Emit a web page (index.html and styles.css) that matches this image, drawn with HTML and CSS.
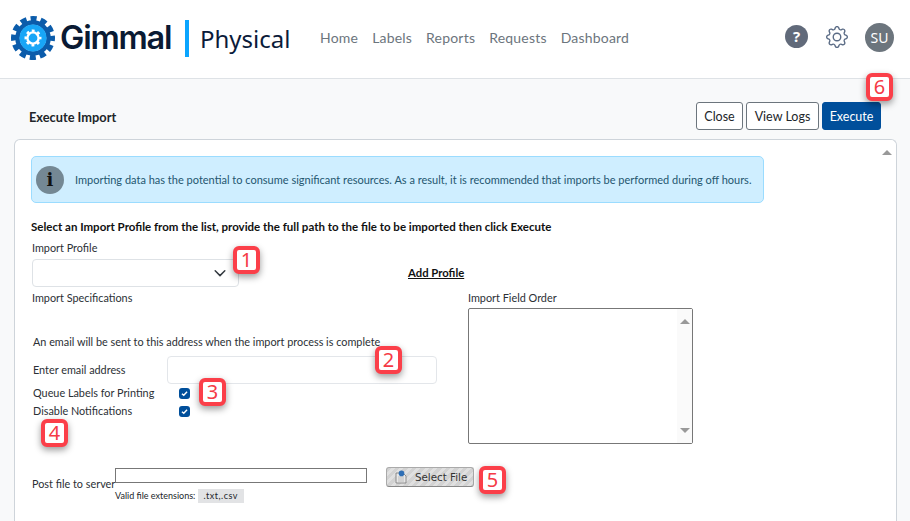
FILE: index.html
```html
<!DOCTYPE html>
<html lang="en">
<head>
<meta charset="utf-8">
<title>Execute Import</title>
<link rel="stylesheet" href="styles.css">
</head>
<body>
<div class="page">
  <header class="topbar">
    <div class="brand">
      <svg class="logo" viewBox="0 0 44 44" aria-hidden="true">
        <circle cx="22" cy="22" r="19" fill="none" stroke="#0b5cab" stroke-width="6" stroke-dasharray="6 3.95" stroke-dashoffset="3" />
        <circle cx="22" cy="22" r="15.5" fill="none" stroke="#0b5cab" stroke-width="4.5"/>
        <circle cx="22" cy="22" r="13.5" fill="#18a6f7"/>
        <circle cx="22" cy="22" r="7.2" fill="none" stroke="#fff" stroke-width="2.6" stroke-dasharray="2.8 2.85" stroke-dashoffset="1.4"/>
        <circle cx="22" cy="22" r="5.6" fill="none" stroke="#fff" stroke-width="2.4"/>
      </svg>
      <span class="brand-name">Gimmal</span>
      <span class="brand-bar"></span>
      <span class="brand-product">Physical</span>
    </div>
    <nav class="nav">
      <a>Home</a><a>Labels</a><a>Reports</a><a>Requests</a><a>Dashboard</a>
    </nav>
    <div class="top-icons">
      <span class="help">?</span>
      <svg class="cog" viewBox="0 0 16 16" aria-hidden="true">
        <path d="M8 4.754a3.246 3.246 0 1 0 0 6.492 3.246 3.246 0 0 0 0-6.492zM5.754 8a2.246 2.246 0 1 1 4.492 0 2.246 2.246 0 0 1-4.492 0z"/>
        <path d="M9.796 1.343c-.527-1.79-3.065-1.79-3.592 0l-.094.319a.873.873 0 0 1-1.255.52l-.292-.16c-1.64-.892-3.433.902-2.54 2.541l.159.292a.873.873 0 0 1-.52 1.255l-.319.094c-1.79.527-1.79 3.065 0 3.592l.319.094a.873.873 0 0 1 .52 1.255l-.16.292c-.892 1.64.901 3.434 2.541 2.54l.292-.159a.873.873 0 0 1 1.255.52l.094.319c.527 1.79 3.065 1.79 3.592 0l.094-.319a.873.873 0 0 1 1.255-.52l.292.16c1.64.893 3.434-.902 2.54-2.541l-.159-.292a.873.873 0 0 1 .52-1.255l.319-.094c1.79-.527 1.79-3.065 0-3.592l-.319-.094a.873.873 0 0 1-.52-1.255l.16-.292c.893-1.64-.902-3.433-2.541-2.54l-.292.159a.873.873 0 0 1-1.255-.52l-.094-.319zm-2.633.283c.246-.835 1.428-.835 1.674 0l.094.319a1.873 1.873 0 0 0 2.693 1.115l.291-.16c.764-.415 1.6.42 1.184 1.185l-.159.292a1.873 1.873 0 0 0 1.116 2.692l.318.094c.835.246.835 1.428 0 1.674l-.319.094a1.873 1.873 0 0 0-1.115 2.693l.16.291c.415.764-.42 1.6-1.185 1.184l-.291-.159a1.873 1.873 0 0 0-2.693 1.116l-.094.318c-.246.835-1.428.835-1.674 0l-.094-.319a1.873 1.873 0 0 0-2.692-1.115l-.292.16c-.764.415-1.6-.42-1.184-1.185l.159-.291A1.873 1.873 0 0 0 1.945 8.93l-.319-.094c-.835-.246-.835-1.428 0-1.674l.319-.094A1.873 1.873 0 0 0 3.06 4.377l-.16-.292c-.415-.764.42-1.6 1.185-1.184l.292.159a1.873 1.873 0 0 0 2.692-1.115l.094-.319z"/>
      </svg>
      <span class="avatar">SU</span>
    </div>
  </header>

  <main class="content">
    <div class="title-row">
      <h1 class="title">Execute Import</h1>
      <div class="actions">
        <button class="btn btn-close">Close</button>
        <button class="btn btn-logs">View Logs</button>
        <button class="btn btn-primary">Execute</button>
      </div>
    </div>

    <section class="panel">
      <div class="panel-scroll"><span class="arrow-up"></span></div>
      <div class="alert">
        <span class="alert-icon">i</span>
        <span class="alert-text">Importing data has the potential to consume significant resources. As a result, it is recommended that imports be performed during off hours.</span>
      </div>
      <p class="instruction">Select an Import Profile from the list, provide the full path to the file to be imported then click Execute</p>

      <div class="profile-row">
        <div class="profile-field">
          <label class="label">Import Profile</label>
          <div class="select">
            <svg class="chevron" viewBox="0 0 16 16" aria-hidden="true"><path d="M2.5 5.5 8 11l5.5-5.5" fill="none" stroke="#343a40" stroke-width="1.7" stroke-linecap="round" stroke-linejoin="round"/></svg>
          </div>
        </div>
        <a class="add-profile">Add Profile</a>
      </div>

      <div class="columns">
        <div class="col-left">
          <div class="label spec-label">Import Specifications</div>
          <div class="label note">An email will be sent to this address when the import process is complete</div>
          <div class="email-row">
            <label class="label row-label">Enter email address</label>
            <div class="input"></div>
          </div>
          <div class="check-row first">
            <label class="label check-label">Queue Labels for Printing</label>
            <span class="check"><svg viewBox="0 0 12 12" aria-hidden="true"><path d="M3.2 6.2 5.2 8l3.6-4" fill="none" stroke="#fff" stroke-width="1.5"/></svg></span>
          </div>
          <div class="check-row">
            <label class="label check-label">Disable Notifications</label>
            <span class="check"><svg viewBox="0 0 12 12" aria-hidden="true"><path d="M3.2 6.2 5.2 8l3.6-4" fill="none" stroke="#fff" stroke-width="1.5"/></svg></span>
          </div>
        </div>
        <div class="col-right">
          <div class="label">Import Field Order</div>
          <div class="listbox">
            <div class="list-scroll"><span class="arrow-up"></span><span class="arrow-down"></span></div>
          </div>
        </div>
      </div>

      <div class="file-row">
        <label class="label post-label">Post file to server</label>
        <div class="file-field">
          <div class="file-input"></div>
          <div class="file-hint">Valid file extensions: <span class="chip">.txt,.csv</span></div>
        </div>
        <button class="select-file">
          <svg class="file-icon" viewBox="0 0 14 14" aria-hidden="true">
            <path d="M2 3h7l3 3v7H2z" fill="#e8e8e8" stroke="#777" stroke-width=".8"/>
            <path d="M4 7h6M4 9h6M4 11h6" stroke="#aaa" stroke-width=".7"/>
            <circle cx="7.5" cy="3.4" r="2.8" fill="#2f6fb5"/>
          </svg>
          <span>Select File</span>
        </button>
      </div>
    </section>
  </main>

  <span class="badge b1">1</span>
  <span class="badge b2">2</span>
  <span class="badge b3">3</span>
  <span class="badge b4">4</span>
  <span class="badge b5">5</span>
  <span class="badge b6">6</span>
</div>
</body>
</html>
```
FILE: styles.css
```css
* { box-sizing: border-box; }
html, body { margin: 0; height: 100%; overflow: hidden; }
body {
  font-family: "Lato", "Noto Sans", sans-serif;
  font-size: 11px;
  color: #212529;
  background: #f8f9fa;
}
.page { position: relative; height: 521px; display: flex; flex-direction: column; overflow: hidden; }

.topbar {
  height: 79px;
  flex: none;
  background: #fff;
  border-bottom: 1px solid #dee2e6;
  display: flex;
  align-items: center;
  padding: 0 16px 3px 11px;
}
.brand { display: flex; align-items: center; width: 309px; }
.logo { width: 44px; height: 44px; flex: none; margin-top: 1px; }
.brand-name {
  font-family: "Inter", sans-serif;
  font-weight: 600;
  font-size: 32.5px;
  letter-spacing: -1.2px;
  color: #0a1a33;
  margin-left: 5px;
  width: 125px;
}
.brand-bar { width: 4px; height: 37px; background: #0aa5ff; flex: none; margin-top: 1px; }
.brand-product { font-family: "Noto Sans", sans-serif; font-size: 24px; color: #0b1b3a; margin: 2px 0 0 11px; line-height: 1; }
.nav { display: flex; gap: 14px; font-size: 14px; color: #6c757d; letter-spacing: .2px; }
.top-icons { margin-left: auto; display: flex; align-items: center; }
.help {
  width: 23px; height: 23px; border-radius: 50%;
  background: #616a7a; color: #fff;
  font-family: "Noto Sans", sans-serif;
  font-weight: 700; font-size: 15px; line-height: 23px; text-align: center;
  margin-top: -2px;
}
.cog { width: 22px; height: 22px; fill: #5a6b85; margin: -1px 0 0 18px; }
.avatar {
  width: 29px; height: 29px; border-radius: 50%;
  background: #6c757d; color: #fff;
  font-family: "Noto Sans", sans-serif;
  font-size: 14px; line-height: 29px; text-align: center;
  margin-left: 17px;
}

.content { flex: 1; min-height: 0; display: flex; flex-direction: column; padding: 23px 13px 0 14px; }
.title-row { display: flex; align-items: center; justify-content: space-between; height: 28px; padding: 0 16px 0 15px; flex: none; }
.title { margin: 2px 0 0; font-size: 12.8px; font-weight: 700; color: #212529; }
.actions { display: flex; gap: 3px; }
.btn {
  height: 28px; padding: 0;
  font: inherit; font-size: 12.5px; color: #212529;
  background: #fff; border: 1px solid #6c757d; border-radius: 3px;
}
.btn-close { width: 47px; }
.btn-logs { width: 73px; }
.btn-primary { width: 59px; background: #004f9b; border-color: #004f9b; color: #fff; }

.panel {
  position: relative;
  flex: 1;
  margin-top: 9px;
  background: #fff;
  border: 1px solid #ced4da;
  border-bottom: 0;
  border-radius: 6px 6px 0 0;
  padding: 16px 16px 0;
}
.panel-scroll { position: absolute; top: 0; right: 0; bottom: 0; width: 16px; background: #fff; border-radius: 0 6px 0 0; }
.panel-scroll .arrow-up { position: absolute; top: 10px; left: 2px; }
.arrow-up, .arrow-down { display: block; width: 0; height: 0; border-left: 5px solid transparent; border-right: 5px solid transparent; }
.arrow-up { border-bottom: 5px solid #999; }
.arrow-down { border-top: 5px solid #999; }

.alert {
  width: 733px; height: 47px;
  display: flex; align-items: center; gap: 11px;
  padding-left: 4px;
  background: #cfeeff;
  border: 1px solid #9bdcff;
  border-radius: 5px;
  color: #24566f;
}
.alert-icon {
  width: 28px; height: 28px; border-radius: 50%; flex: none;
  background: #748894; color: #111;
  font-family: "DejaVu Serif", serif; font-weight: 700; font-size: 18px; line-height: 28px; text-align: center;
}
.alert-text { white-space: nowrap; }
.instruction { margin: 16px 0 0; font-size: 11.5px; font-weight: 700; color: #111; line-height: 16px; white-space: nowrap; }
.label { display: block; font-size: 10.85px; line-height: 14px; color: #2b3035; white-space: nowrap; }

.profile-row { display: flex; align-items: flex-end; margin-top: 6px; }
.profile-field { width: 377px; padding-left: 1px; }
.select {
  width: 207px; height: 28px; margin-top: 4px;
  background: #fff; border: 1px solid #dee2e6; border-radius: 4px;
  display: flex; align-items: center; justify-content: flex-end; padding-right: 11px;
}
.chevron { width: 14px; height: 14px; }
.add-profile { font-size: 11.3px; font-weight: 700; color: #111; text-decoration: underline; line-height: 14px; margin-bottom: 7px; }

.columns { display: flex; margin-top: 4px; }
.col-left { width: 437px; padding-left: 1px; }
.spec-label { line-height: 14px; }
.note { margin: 30px 0 0 1px; }
.email-row { display: flex; align-items: center; margin: 7px 0 0 1px; }
.row-label { width: 134px; }
.input { width: 270px; height: 28px; background: #fff; border: 1px solid #e3e6ea; border-radius: 4px; }
.check-row { display: flex; align-items: center; height: 18px; padding-left: 1px; }
.check-row.first { margin-top: 0; }
.check-label { width: 146px; }
.check { width: 11px; height: 11px; border-radius: 3px; background: #004f9b; display: block; }
.check svg { display: block; width: 11px; height: 11px; }
.col-right { width: 225px; }
.listbox {
  position: relative;
  width: 225px; height: 136px; margin-top: 3px;
  background: #fff; border: 1px solid #777; border-radius: 2px;
}
.list-scroll {
  position: absolute; top: 0; right: 0; bottom: 0; width: 15px;
  background: #fafafa;
  display: flex; flex-direction: column; justify-content: space-between; align-items: center;
  padding: 10px 0 10px;
}

.file-row { display: flex; align-items: flex-start; margin-top: 24px; }
.post-label { width: 84px; margin-top: 9px; padding-left: 1px; }
.file-field { width: 252px; }
.file-input { width: 252px; height: 15px; background: #fff; border: 1px solid #777; }
.file-hint { font-size: 9px; line-height: 14px; margin-top: 6px; white-space: nowrap; }
.chip { background: #e2e3e5; padding: 2px 0; width: 46px; text-align: center; display: inline-block; line-height: 10px; letter-spacing: .5px; }
.select-file {
  display: flex; align-items: center; gap: 7px;
  width: 88px; height: 20px; margin: -1px 0 0 19px; padding: 0 0 0 7px;
  font-family: "DejaVu Sans", sans-serif; font-size: 10.3px; color: #333;
  border: 1px solid #aaa; border-bottom-color: #888; border-radius: 3px;
  background: repeating-linear-gradient(135deg, #d2d2d2 0 3px, #e0e0e0 3px 6px);
}
.file-icon { width: 14px; height: 14px; flex: none; }

.badge {
  position: absolute;
  width: 27px; height: 28px;
  background: #fff;
  border: 4px solid #fb3f49;
  border-radius: 6px;
  box-shadow: 0 3px 7px rgba(0,0,0,.4);
  color: #f53a46;
  font-family: "Noto Sans", sans-serif;
  font-size: 20px; line-height: 19px; text-align: center;
}
.b1 { left: 233px; top: 246px; }
.b2 { left: 375px; top: 346px; }
.b3 { left: 199px; top: 378px; }
.b4 { left: 41px; top: 419px; }
.b5 { left: 479px; top: 466px; }
.b6 { left: 866px; top: 73px; }
```
